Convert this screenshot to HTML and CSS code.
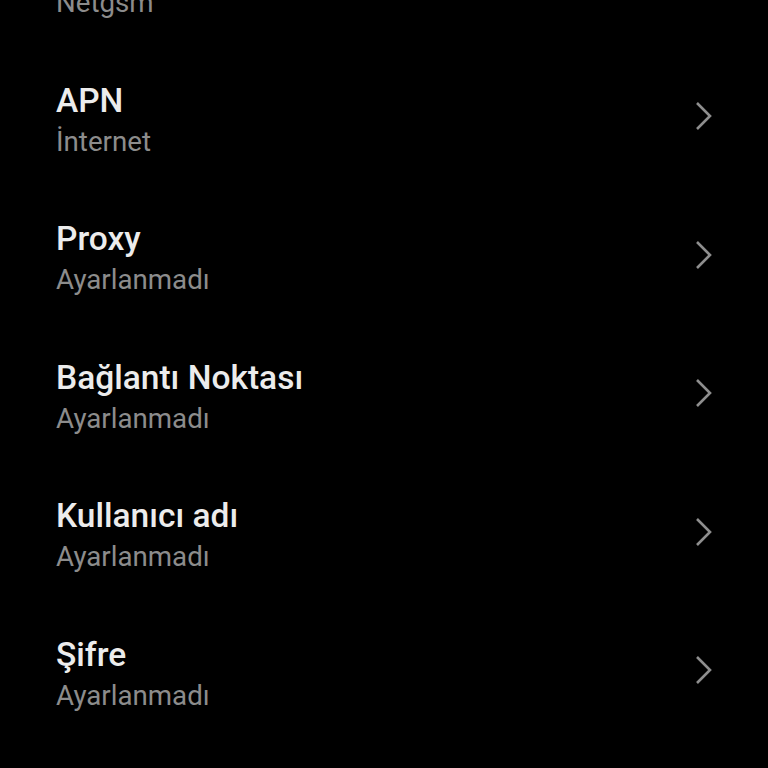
FILE: index.html
```html
<!DOCTYPE html>
<html lang="tr">
<head>
  <meta charset="UTF-8" />
  <meta name="viewport" content="width=device-width, initial-scale=1.0"/>
  <title>APN</title>
  <link rel="stylesheet" href="styles.css">
</head>
<body>
  <div class="lista">
    <div class="fila">
      <div class="textos">
        <div class="titulo">Ad</div>
        <div class="sub">Netgsm</div>
      </div>
    </div>
    <div class="fila">
      <div class="textos">
        <div class="titulo">APN</div>
        <div class="sub">İnternet</div>
      </div>
      <svg class="chevron" viewBox="0 0 18 30"><path d="M2 2 L15 15 L2 28"/></svg>
    </div>
    <div class="fila">
      <div class="textos">
        <div class="titulo">Proxy</div>
        <div class="sub">Ayarlanmadı</div>
      </div>
      <svg class="chevron" viewBox="0 0 18 30"><path d="M2 2 L15 15 L2 28"/></svg>
    </div>
    <div class="fila">
      <div class="textos">
        <div class="titulo">Bağlantı Noktası</div>
        <div class="sub">Ayarlanmadı</div>
      </div>
      <svg class="chevron" viewBox="0 0 18 30"><path d="M2 2 L15 15 L2 28"/></svg>
    </div>
    <div class="fila">
      <div class="textos">
        <div class="titulo">Kullanıcı adı</div>
        <div class="sub">Ayarlanmadı</div>
      </div>
      <svg class="chevron" viewBox="0 0 18 30"><path d="M2 2 L15 15 L2 28"/></svg>
    </div>
    <div class="fila">
      <div class="textos">
        <div class="titulo">Şifre</div>
        <div class="sub">Ayarlanmadı</div>
      </div>
      <svg class="chevron" viewBox="0 0 18 30"><path d="M2 2 L15 15 L2 28"/></svg>
    </div>
  </div>
</body>
</html>
```

FILE: styles.css
```css
body {
  background-color: #000;
  margin: 0;
  font-family: Roboto, "Noto Sans", sans-serif;
  overflow: hidden;
}

.lista {
  margin-top: -87px;
}

.fila {
  height: 138.5px;
  display: flex;
  align-items: center;
  justify-content: space-between;
  padding: 0 56px;
}

.titulo {
  color: #ececec;
  font-size: 33.5px;
  font-weight: 500;
  line-height: 41px;
}

.sub {
  color: #8c8c8c;
  font-size: 27.7px;
  line-height: 41px;
}

.chevron {
  width: 18px;
  height: 30px;
  margin-right: -1px;
  margin-bottom: 9px;
  fill: none;
  stroke: #8e8e8e;
  stroke-width: 2.6;
}
```
